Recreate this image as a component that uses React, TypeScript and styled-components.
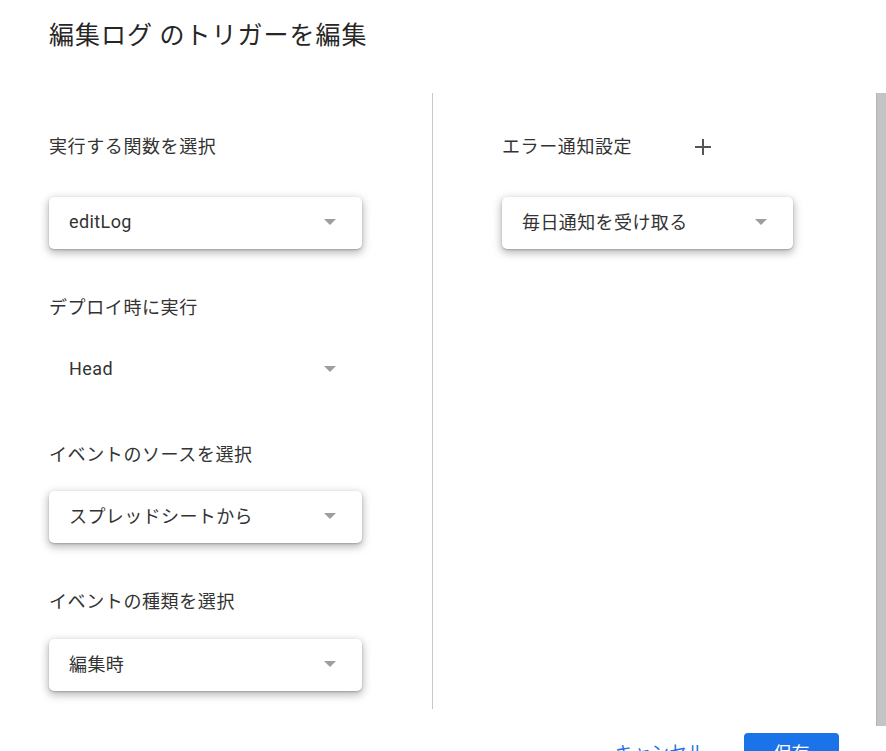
import styled, { createGlobalStyle } from "styled-components"

const GlobalStyle = createGlobalStyle`
  html, body {
    margin: 0;
    padding: 0;
    background: #ffffff;
    overflow: hidden;
  }

  body {
    font-family: Roboto, "Noto Sans CJK JP", sans-serif;
    color: #333333;
  }
`

interface Field {
  label: string
  value: string
  flat?: boolean
  gap: number
}

const fields: Field[] = [
  { label: "実行する関数を選択", value: "editLog", gap: 39 },
  { label: "デプロイ時に実行", value: "Head", flat: true, gap: 25 },
  { label: "イベントのソースを選択", value: "スプレッドシートから", gap: 25 },
  { label: "イベントの種類を選択", value: "編集時", gap: 26 },
]

function Select({ value, flat }: { value: string; flat?: boolean }) {
  return (
    <SelectBox $flat={flat}>
      <SelectValue>{value}</SelectValue>
      <Caret />
    </SelectBox>
  )
}

function PlusIcon() {
  return (
    <svg width="18" height="18" viewBox="0 0 18 18">
      <rect x="8" y="1" width="2" height="16" fill="#555" />
      <rect x="1" y="8" width="16" height="2" fill="#555" />
    </svg>
  )
}

export default function App() {
  return (
    <>
      <GlobalStyle />
      <Dialog>
        <Header>
          <Title>編集ログ のトリガーを編集</Title>
        </Header>

        <Body>
          <LeftColumn>
            {fields.map((f) => (
              <FieldGroup key={f.label} $gap={f.gap}>
                <Label>{f.label}</Label>
                <Select value={f.value} flat={f.flat} />
              </FieldGroup>
            ))}
          </LeftColumn>

          <RightColumn>
            <FieldGroup $gap={39}>
              <LabelRow>
                <Label>エラー通知設定</Label>
                <AddButton aria-label="追加">
                  <PlusIcon />
                </AddButton>
              </LabelRow>
              <NarrowSelect>
                <Select value="毎日通知を受け取る" />
              </NarrowSelect>
            </FieldGroup>
          </RightColumn>

          <ScrollThumb />
        </Body>

        <Footer>
          <TextButton>キャンセル</TextButton>
          <PrimaryButton>保存</PrimaryButton>
        </Footer>
      </Dialog>
    </>
  )
}

const Dialog = styled.div`
  width: 886px;
  height: 751px;
  overflow: hidden;
  background: #ffffff;
`

const Header = styled.div`
  height: 93px;
  box-sizing: border-box;
  padding: 15px 0 0 49px;
`

const Title = styled.h1`
  margin: 0;
  font-family: "Noto Sans CJK JP", sans-serif;
  font-size: 25px;
  line-height: 36px;
  font-weight: 400;
  letter-spacing: 1px;
  color: #262626;
`

const Body = styled.div`
  display: flex;
  align-items: flex-start;
  height: 633px;
  padding-left: 49px;
`

const LeftColumn = styled.div`
  width: 384px;
  box-sizing: border-box;
  padding: 39px 0 18px 0;
  border-right: 1px solid #c8c8c8;
  display: flex;
  flex-direction: column;
  gap: 44px;
`

const RightColumn = styled.div`
  flex: 1;
  padding: 39px 0 0 69px;
`

const FieldGroup = styled.div<{ $gap: number }>`
  display: flex;
  flex-direction: column;
  gap: ${(p) => p.$gap}px;
  width: 313px;
`

const LabelRow = styled.div`
  display: flex;
  align-items: center;
`

const Label = styled.div`
  font-family: "Noto Sans CJK JP", sans-serif;
  font-size: 18px;
  line-height: 26px;
  letter-spacing: 0.6px;
  color: #333333;
  white-space: nowrap;
`

const AddButton = styled.button`
  margin: 4px 0 0 60px;
  padding: 0;
  border: none;
  background: none;
  width: 22px;
  height: 22px;
  display: flex;
  align-items: center;
  justify-content: center;
  cursor: pointer;
`

const NarrowSelect = styled.div`
  width: 291px;
`

const SelectBox = styled.div<{ $flat?: boolean }>`
  height: 52px;
  box-sizing: border-box;
  padding: 0 26px 4px 20px;
  display: flex;
  align-items: center;
  justify-content: space-between;
  background: #ffffff;
  border-radius: 5px;
  box-shadow: ${(p) =>
    p.$flat
      ? "none"
      : "0 1px 2px rgba(0, 0, 0, 0.2), 0 3px 8px 1px rgba(0, 0, 0, 0.28)"};
`

const SelectValue = styled.span`
  font-family: Roboto, "Noto Sans CJK JP", sans-serif;
  font-size: 18px;
  letter-spacing: 0.4px;
  color: #333333;
`

const Caret = styled.span`
  width: 0;
  height: 0;
  border-left: 6px solid transparent;
  border-right: 6px solid transparent;
  border-top: 6px solid #9e9e9e;
  margin-top: 2px;
`

const ScrollThumb = styled.div`
  width: 10px;
  height: 633px;
  box-sizing: border-box;
  background: #c4c4c4;
  border-left: 1px solid #b4b4b4;
  flex-shrink: 0;
`

const Footer = styled.div`
  display: flex;
  justify-content: flex-end;
  align-items: center;
  gap: 23px;
  margin-top: 7px;
  padding-right: 47px;
`

const TextButton = styled.button`
  height: 36px;
  padding: 0 16px;
  border: none;
  background: none;
  font-family: "Noto Sans CJK JP", sans-serif;
  font-size: 18px;
  line-height: 36px;
  color: #1a73e8;
  cursor: pointer;
`

const PrimaryButton = styled.button`
  width: 95px;
  height: 36px;
  border: none;
  border-radius: 4px;
  background: #1a73e8;
  font-family: "Noto Sans CJK JP", sans-serif;
  font-size: 18px;
  line-height: 36px;
  color: #ffffff;
  cursor: pointer;
`
